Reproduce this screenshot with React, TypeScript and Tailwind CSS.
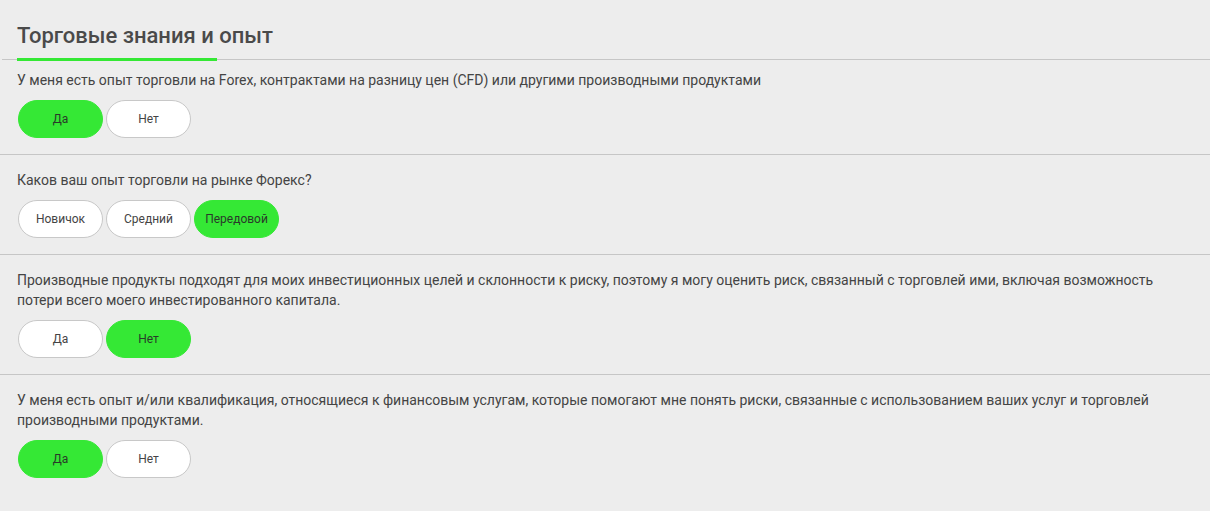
import { useState } from "react";

type Question = {
    id: string;
    text: string;
    options: string[];
    selected: string;
};

const questions: Question[] = [
    {
        id: "forex",
        text: "У меня есть опыт торговли на Forex, контрактами на разницу цен (CFD) или другими производными продуктами",
        options: ["Да", "Нет"],
        selected: "Да",
    },
    {
        id: "level",
        text: "Каков ваш опыт торговли на рынке Форекс?",
        options: ["Новичок", "Средний", "Передовой"],
        selected: "Передовой",
    },
    {
        id: "suitable",
        text: "Производные продукты подходят для моих инвестиционных целей и склонности к риску, поэтому я могу оценить риск, связанный с торговлей ими, включая возможность потери всего моего инвестированного капитала.",
        options: ["Да", "Нет"],
        selected: "Нет",
    },
    {
        id: "qualification",
        text: "У меня есть опыт и/или квалификация, относящиеся к финансовым услугам, которые помогают мне понять риски, связанные с использованием ваших услуг и торговлей производными продуктами.",
        options: ["Да", "Нет"],
        selected: "Да",
    },
];

export default function App() {
    const [answers, setAnswers] = useState<Record<string, string>>(
        Object.fromEntries(questions.map((q) => [q.id, q.selected]))
    );

    return (
        <div
            className="min-h-screen bg-[#ededed] text-[#444]"
            style={{ fontFamily: "Roboto, 'Noto Sans', sans-serif" }}
        >
            {/* heading with green underline over the grey rule */}
            <div className="ml-[2px] border-b border-[#c6c6c6] pt-[22px]">
                <h2 className="-mb-[2px] ml-[15px] w-[200px] border-b-[3px] border-[#35e835] pb-[8px] text-[22px] font-medium leading-[28px] text-[#4a4a4a]">
                    <span className="whitespace-nowrap">Торговые знания и опыт</span>
                </h2>
            </div>

            {questions.map((q, i) => (
                <div
                    key={q.id}
                    className={
                        i === questions.length - 1
                            ? "px-[17px] pb-4 pt-[15px]"
                            : i === 0
                            ? "border-b border-[#c6c6c6] px-[17px] pb-4 pt-[10px]"
                            : "border-b border-[#c6c6c6] px-[17px] pb-4 pt-[15px]"
                    }
                >
                    <p className="pr-[20px] text-[14px] leading-[20px] text-[#444]">{q.text}</p>
                    <div className="mt-[10px] flex gap-[3px] pl-px">
                        {q.options.map((opt) => {
                            const active = answers[q.id] === opt;
                            return (
                                <button
                                    key={opt}
                                    onClick={() => setAnswers({ ...answers, [q.id]: opt })}
                                    className={
                                        active
                                            ? "h-[38px] w-[85px] rounded-full border border-[#35e835] bg-[#35e835] text-[12px] text-[#2a3a2a]"
                                            : "h-[38px] w-[85px] rounded-full border border-[#c8c8c8] bg-white text-[12px] text-[#444]"
                                    }
                                >
                                    {opt}
                                </button>
                            );
                        })}
                    </div>
                </div>
            ))}
        </div>
    );
}
